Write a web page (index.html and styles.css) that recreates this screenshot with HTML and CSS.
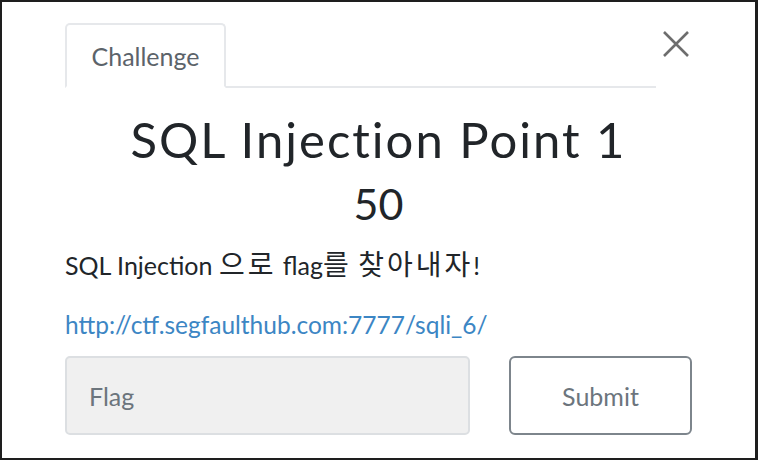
FILE: index.html
```html
<!DOCTYPE html>
<html lang="ko">
<head>
    <meta charset="UTF-8">
    <meta name="viewport" content="width=device-width, initial-scale=1.0">
    <title>Challenge</title>
    <link rel="stylesheet" href="styles.css">
</head>
<body>
    <div class="frame">
        <div class="modal">
            <div class="modal-header">
                <ul class="tabs">
                    <li class="tab active">Challenge</li>
                </ul>
                <button class="close" aria-label="Close">
                    <svg width="28" height="28" viewBox="0 0 28 28">
                        <path d="M2 2 L26 26 M26 2 L2 26" stroke="#6d6d6d" stroke-width="2.6" fill="none"/>
                    </svg>
                </button>
            </div>

            <h1 class="chal-name">SQL Injection Point 1</h1>
            <h2 class="chal-value">50</h2>

            <p class="chal-desc">SQL Injection <span class="ko">으로</span> flag<span class="ko">를</span> <span class="ko">찾아내자</span>!</p>
            <p class="chal-link"><a href="#">http://ctf.segfaulthub.com:7777/sqli_6/</a></p>

            <form class="submit-row" onsubmit="return false;">
                <input class="flag-input" type="text" placeholder="Flag">
                <button class="submit-btn" type="submit">Submit</button>
            </form>
        </div>
    </div>
</body>
</html>
```

FILE: styles.css
```css
html, body {
    margin: 0;
    height: 100%;
}
body {
    font-family: Lato, "Noto Sans CJK KR", sans-serif;
    background: #fff;
    color: #212529;
}
.frame {
    box-sizing: border-box;
    height: 460px;
    border: 2px solid #1e1e1e;
    border-right-width: 3px;
    padding: 21px 63px 0 63px;
}
.modal-header {
    display: flex;
    align-items: flex-start;
}
.tabs {
    flex: 1;
    list-style: none;
    margin: 0;
    padding: 0;
    display: flex;
    border-bottom: 2px solid #e6e8eb;
    margin-right: 4px;
}
.tab {
    box-sizing: border-box;
    width: 161px;
    height: 65px;
    margin-bottom: -2px;
    border: 2px solid #e6e8eb;
    border-bottom-color: #fff;
    border-radius: 5px 5px 0 0;
    background: #fff;
    color: #5c636a;
    font-size: 25px;
    line-height: 63px;
    text-align: center;
}
.close {
    background: none;
    border: none;
    padding: 0;
    margin: 5px 0 0 0;
    width: 32px;
    height: 32px;
    display: flex;
    align-items: center;
    justify-content: center;
    cursor: pointer;
}
.chal-name {
    margin: 22px 0 0;
    text-align: center;
    font-weight: 400;
    font-size: 49px;
    line-height: 58px;
    letter-spacing: 2px;
    color: #212529;
}
.chal-value {
    margin: 13px 0 0;
    text-align: center;
    font-weight: 400;
    font-size: 43px;
    line-height: 46px;
    color: #212529;
}
.chal-desc {
    margin: 22px 0 0;
    font-size: 25px;
    line-height: 32px;
}
.chal-desc .ko {
    font-size: 28px;
    line-height: 1;
    letter-spacing: 3px;
}
.chal-link {
    margin: 28px 0 0;
    font-size: 24.5px;
    line-height: 32px;
}
.chal-link a {
    color: #3c86c4;
    text-decoration: none;
}
.submit-row {
    display: flex;
    gap: 39px;
    margin-top: 15px;
}
.flag-input {
    box-sizing: border-box;
    width: 405px;
    height: 79px;
    border: 2px solid #dcdfe2;
    border-radius: 5px;
    background: #f0f0f0;
    padding: 0 22px;
    font-family: inherit;
    font-size: 25px;
    color: #495057;
}
.flag-input::placeholder {
    color: #6c757d;
}
.submit-btn {
    box-sizing: border-box;
    width: 183px;
    height: 79px;
    border: 2px solid #7d858c;
    border-radius: 6px;
    background: #fff;
    font-family: inherit;
    font-size: 25px;
    color: #6c757d;
    cursor: pointer;
}
```
